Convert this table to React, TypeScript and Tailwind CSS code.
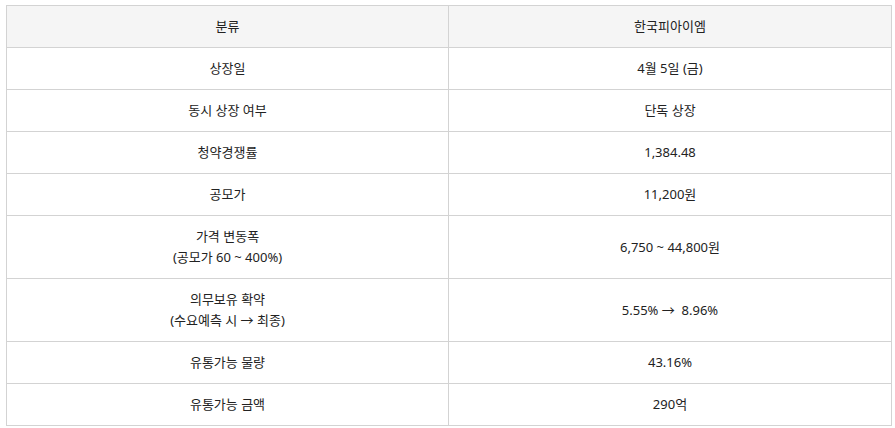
import React from 'react';

const rows: [React.ReactNode, React.ReactNode][] = [
  ['상장일', '4월 5일 (금)'],
  ['동시 상장 여부', '단독 상장'],
  ['청약경쟁률', '1,384.48'],
  ['공모가', '11,200원'],
  [<>가격 변동폭<br />(공모가 60 ~ 400%)</>, '6,750 ~ 44,800원'],
  [<>의무보유 확약<br />(수요예측 시 → 최종)</>, '5.55% →  8.96%'],
  ['유통가능 물량', '43.16%'],
  ['유통가능 금액', '290억'],
];

export default function App() {
  return (
    <div className="bg-white w-[895px] h-[428px] pt-[5px] pl-[6px] font-['Noto_Sans','Noto_Sans_CJK_KR',sans-serif] text-[13px] leading-[21px] text-[#222]">
      <table className="w-[886px] border-collapse table-fixed">
        <colgroup>
          <col className="w-[442px]" />
          <col />
        </colgroup>
        <thead>
          <tr className="bg-[#f5f5f5]">
            <th className="border border-[#d3d3d3] py-[10px] font-normal text-center">분류</th>
            <th className="border border-[#d3d3d3] py-[10px] font-normal text-center">한국피아이엠</th>
          </tr>
        </thead>
        <tbody>
          {rows.map(([label, value], i) => (
            <tr key={i}>
              <td className="border border-[#d3d3d3] py-[10px] text-center">{label}</td>
              <td className="border border-[#d3d3d3] py-[10px] text-center whitespace-pre">{value}</td>
            </tr>
          ))}
        </tbody>
      </table>
    </div>
  );
}
